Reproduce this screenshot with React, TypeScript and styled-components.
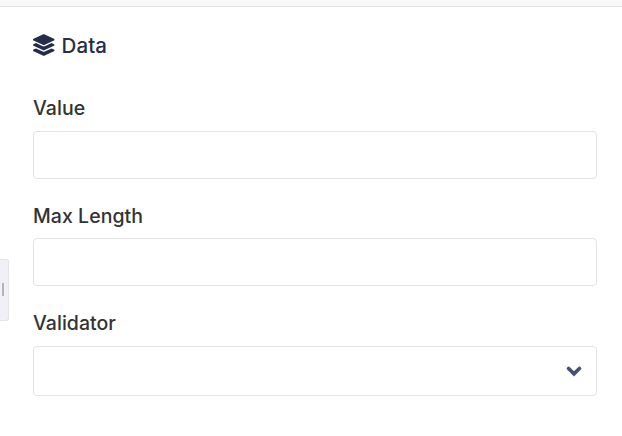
import React from "react";
import styled, { createGlobalStyle } from "styled-components";
import { FaLayerGroup } from "react-icons/fa";

const GlobalStyle = createGlobalStyle`
  *, *::before, *::after { box-sizing: border-box; }
  html, body { margin: 0; padding: 0; background: #fff; overflow: hidden; }
  body { font-family: Inter, "Liberation Sans", sans-serif; }
`;

const Page = styled.div`
  position: relative;
  width: 622px;
  height: 436px;
  background: #fff;
  color: #333;
`;

const TopBar = styled.div`
  height: 7px;
  background: #f8f8f8;
  border-bottom: 1px solid #e3e3e4;
`;

const Panel = styled.section`
  display: flex;
  flex-direction: column;
  padding: 24px 25px 0 33px;
`;

const Heading = styled.h2`
  display: flex;
  align-items: center;
  gap: 7px;
  height: 28px;
  margin: 0 0 35.4px;
  font-size: 20.5px;
  font-weight: 450;
  letter-spacing: 0.1px;
  color: #252d4a;
`;

const LayersIcon = styled(FaLayerGroup)`
  width: 21.5px;
  height: 22px;
`;

const Field = styled.label`
  display: flex;
  flex-direction: column;
`;

const LabelText = styled.span`
  height: 28px;
  margin-bottom: 8.5px;
  line-height: 28px;
  font-size: 19.5px;
  font-weight: 480;
  letter-spacing: 0.04px;
`;

const Input = styled.input`
  width: 100%;
  height: 48px;
  margin-bottom: 23px;
  padding: 0 14px;
  border: 1px solid #e3e3e4;
  border-radius: 4px;
  background: #fff;
  font: inherit;
  outline: none;
`;

const Select = styled.div`
  display: flex;
  align-items: center;
  justify-content: flex-end;
  height: 50px;
  padding: 0 14px;
  border: 1px solid #e3e3e4;
  border-radius: 4px;
  color: #485172;
`;

const ResizeHandle = styled.div`
  position: absolute;
  left: 0;
  top: 259px;
  width: 9px;
  height: 62px;
  display: flex;
  align-items: center;
  padding: 0 0 2px 2px;
  background: #f0f0f6;
  border: 1px solid #e3e3e6;
  border-left: 0;
  border-radius: 0 3px 3px 0;
`;

const Grip = styled.span`
  width: 2px;
  height: 13px;
  background: #b5b5b8;
`;

const Chevron = () => (
  <svg width="16" height="16" viewBox="0 0 16 16" fill="none" aria-hidden="true">
    <path d="M2.6 5.5L8 10.8L13.4 5.5" stroke="currentColor" strokeWidth="3.7" strokeLinecap="round" />
  </svg>
);

export default function App() {
  return (
    <>
      <GlobalStyle />
      <Page>
        <TopBar />
        <Panel>
          <Heading><LayersIcon />Data</Heading>
          <Field><LabelText>Value</LabelText><Input /></Field>
          <Field><LabelText>Max Length</LabelText><Input /></Field>
          <Field as="div"><LabelText>Validator</LabelText><Select><Chevron /></Select></Field>
        </Panel>
        <ResizeHandle><Grip /></ResizeHandle>
      </Page>
    </>
  );
}
